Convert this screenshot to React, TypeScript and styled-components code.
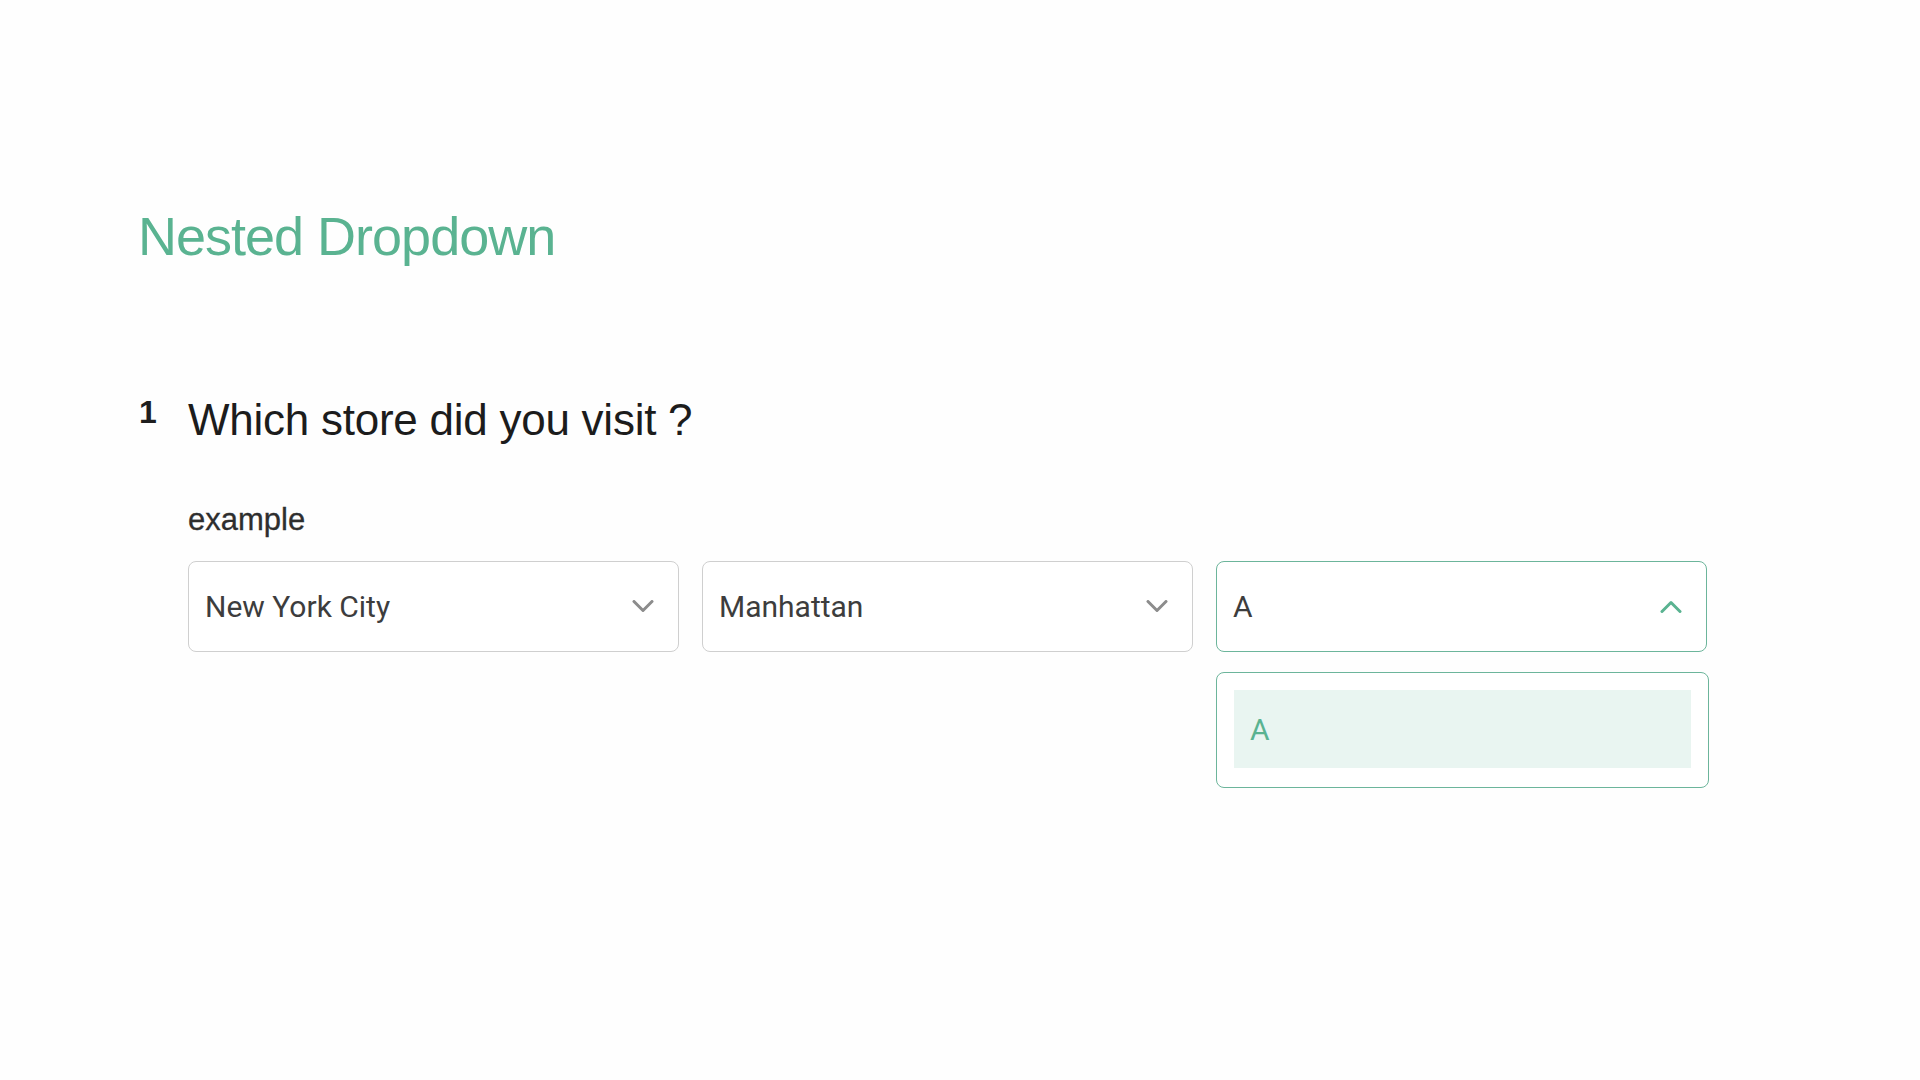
import React from "react";
import styled, { createGlobalStyle } from "styled-components";

const GlobalStyle = createGlobalStyle`
  html, body {
    margin: 0;
    padding: 0;
    background: #fefefe;
  }
  body {
    font-family: "Liberation Sans", Arial, sans-serif;
    -webkit-font-smoothing: antialiased;
  }
`;

const Page = styled.main`
  width: 1920px;
  min-height: 1080px;
  box-sizing: border-box;
  padding: 204px 0 0 138px;
  background: #fefefe;
`;

const Title = styled.h1`
  margin: 0;
  font-family: "Liberation Sans", Arial, sans-serif;
  font-weight: 400;
  font-size: 54px;
  line-height: 64px;
  letter-spacing: -1px;
  color: #5ab391;
`;

const QuestionRow = styled.div`
  display: flex;
  align-items: flex-start;
  margin-top: 127px;
`;

const QuestionNumber = styled.span`
  width: 49px;
  flex: none;
  padding-left: 1px;
  margin-top: -1px;
  font-family: "Liberation Sans", Arial, sans-serif;
  font-weight: 700;
  font-size: 32px;
  line-height: 36px;
  color: #1e1e1e;
`;

const QuestionText = styled.h2`
  margin: 0;
  font-family: "Liberation Sans", Arial, sans-serif;
  font-weight: 400;
  font-size: 44px;
  line-height: 50px;
  letter-spacing: -0.25px;
  color: #1c1c1c;
`;

const Body = styled.section`
  margin-left: 50px;
  margin-top: 57px;
`;

const Label = styled.div`
  font-family: "Liberation Sans", Arial, sans-serif;
  font-size: 31px;
  line-height: 36px;
  color: #2e2e2e;
  -webkit-text-stroke: 0.3px #2e2e2e;
`;

const SelectGrid = styled.div`
  margin-top: 23px;
  width: 1519px;
  display: grid;
  grid-template-columns: repeat(3, 1fr);
  column-gap: 23px;
`;

const SelectCell = styled.div`
  position: relative;
`;

const SelectBox = styled.div<{ $open?: boolean }>`
  height: 91px;
  box-sizing: border-box;
  border: 1.5px solid ${(p) => (p.$open ? "#6cb59b" : "#cfcfcf")};
  border-radius: 8px;
  background: #fff;
  display: flex;
  align-items: center;
  justify-content: space-between;
  padding: 0 24px 0 16px;
`;

const SelectValue = styled.span`
  font-family: Roboto, "Liberation Sans", sans-serif;
  font-size: 30px;
  color: #3d3d3d;
`;

const Chevron = styled.svg<{ $open?: boolean }>`
  width: 22px;
  height: 13px;
  flex: none;
  color: ${(p) => (p.$open ? "#5ab391" : "#8c8c8c")};
`;

const Menu = styled.div`
  position: absolute;
  left: 0;
  right: -2px;
  top: calc(100% + 20px);
  box-sizing: border-box;
  border: 1.5px solid #6cb59b;
  border-radius: 8px;
  background: #fff;
  padding: 17px 17px 19px 17px;
`;

const Option = styled.div<{ $active?: boolean }>`
  height: 78px;
  display: flex;
  align-items: center;
  padding-left: 16px;
  background: ${(p) => (p.$active ? "#e9f5f1" : "transparent")};
  font-family: Roboto, "Liberation Sans", sans-serif;
  font-size: 30px;
  color: #5ab391;
`;

const ChevronIcon: React.FC<{ open?: boolean }> = ({ open }) => (
  <Chevron $open={open} viewBox="0 0 22 13" fill="none">
    <polyline
      points={open ? "2,11.5 11,2.5 20,11.5" : "2,1.5 11,10.5 20,1.5"}
      stroke="currentColor"
      strokeWidth="3"
      strokeLinecap="round"
      strokeLinejoin="round"
    />
  </Chevron>
);

const Select: React.FC<{ value: string; open?: boolean; options?: string[] }> = ({
  value,
  open,
  options,
}) => (
  <SelectCell>
    <SelectBox $open={open}>
      <SelectValue>{value}</SelectValue>
      <ChevronIcon open={open} />
    </SelectBox>
    {open && options && (
      <Menu>
        {options.map((o) => (
          <Option key={o} $active={o === value}>
            {o}
          </Option>
        ))}
      </Menu>
    )}
  </SelectCell>
);

export default function App() {
  return (
    <>
      <GlobalStyle />
      <Page>
        <Title>Nested Dropdown</Title>
        <QuestionRow>
          <QuestionNumber>1</QuestionNumber>
          <QuestionText>Which store did you visit ?</QuestionText>
        </QuestionRow>
        <Body>
          <Label>example</Label>
          <SelectGrid>
            <Select value="New York City" />
            <Select value="Manhattan" />
            <Select value="A" open options={["A"]} />
          </SelectGrid>
        </Body>
      </Page>
    </>
  );
}
